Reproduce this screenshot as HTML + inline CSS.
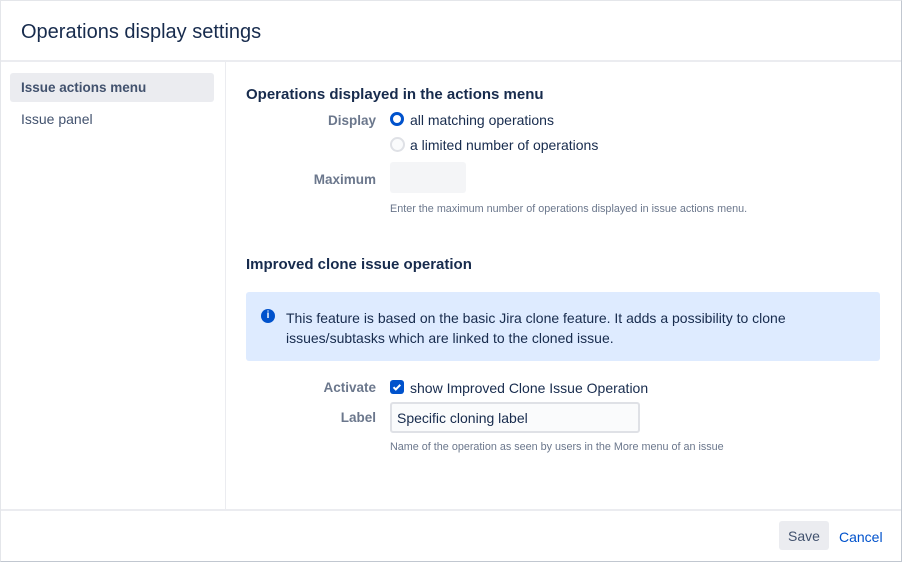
<!DOCTYPE html><html><head><style>
body{margin:0;width:902px;height:562px;background:#fff;font-family:"Liberation Sans",sans-serif;color:#172b4d;position:relative;overflow:hidden}
.a{position:absolute;white-space:nowrap}
.frame{position:absolute;left:0;top:0;width:900px;height:560px;border:1px solid #c1c7d0;border-top-color:#e4e6ea;border-left-color:#e4e6ea}
.lbl{color:#6b778c;font-weight:bold;font-size:13.5px;text-align:right;width:120px}
.t{font-size:14px;color:#172b4d}
.h{font-size:15px;font-weight:bold;color:#172b4d}
.help{font-size:10.8px;color:#6b778c}
</style></head><body>
<div class="frame"></div>
<div class="a" style="left:21px;top:21px;font-size:20px;color:#172b4d">Operations display settings</div>
<div class="a" style="left:1px;top:60px;width:900px;height:2px;background:#ebecf0"></div>
<div class="a" style="left:225px;top:62px;width:1px;height:447px;background:#ebecf0"></div>
<div class="a" style="left:10px;top:73px;width:204px;height:29px;background:#ebecf0;border-radius:3px"></div>
<div class="a t" style="left:21px;top:80px;font-weight:bold;color:#42526e;font-size:13.5px">Issue actions menu</div>
<div class="a t" style="left:21px;top:111px;color:#42526e">Issue panel</div>
<div class="a h" style="left:246px;top:86px">Operations displayed in the actions menu</div>
<div class="a lbl" style="left:256px;top:113px">Display</div>
<div class="a" style="left:390px;top:112px;width:8px;height:8px;border:3.5px solid #0052cc;border-radius:50%;background:#fff"></div>
<div class="a t" style="left:410px;top:112px">all matching operations</div>
<div class="a" style="left:390px;top:137px;width:11px;height:11px;border:2px solid #dfe1e6;border-radius:50%;background:#fafbfc"></div>
<div class="a t" style="left:410px;top:137px">a limited number of operations</div>
<div class="a lbl" style="left:256px;top:172px">Maximum</div>
<div class="a" style="left:390px;top:162px;width:76px;height:31px;background:#f4f5f7;border-radius:3px"></div>
<div class="a help" style="left:390px;top:203px">Enter the maximum number of operations displayed in issue actions menu.</div>
<div class="a h" style="left:246px;top:256px">Improved clone issue operation</div>
<div class="a" style="left:246px;top:292px;width:634px;height:69px;background:#deebff;border-radius:3px"></div>
<div class="a" style="left:261px;top:309px;width:14px;height:14px;border-radius:50%;background:#0052cc;color:#fff;font-size:10px;font-weight:bold;text-align:center;line-height:14px">i</div>
<div class="a t" style="left:286px;top:308px;line-height:20px">This feature is based on the basic Jira clone feature. It adds a possibility to clone<br>issues/subtasks which are linked to the cloned issue.</div>
<div class="a lbl" style="left:256px;top:380px">Activate</div>
<div class="a" style="left:390px;top:380px;width:14px;height:14px;background:#0052cc;border-radius:3px"><svg width="14" height="14" viewBox="0 0 14 14"><path d="M3.5 7.2l2.3 2.3 4.5-4.7" stroke="#fff" stroke-width="2" fill="none"/></svg></div>
<div class="a t" style="left:410px;top:380px">show Improved Clone Issue Operation</div>
<div class="a lbl" style="left:256px;top:410px">Label</div>
<div class="a" style="left:390px;top:402px;width:246px;height:27px;border:2px solid #dfe1e6;border-radius:3px;background:#fafbfc"></div>
<div class="a t" style="left:397px;top:410px">Specific cloning label</div>
<div class="a help" style="left:390px;top:441px">Name of the operation as seen by users in the More menu of an issue</div>
<div class="a" style="left:1px;top:509px;width:900px;height:2px;background:#ebecf0"></div>
<div class="a" style="left:779px;top:521px;width:50px;height:29px;background:#ebecf0;border-radius:3px;color:#42526e;font-size:14px;text-align:center;line-height:30px">Save</div>
<div class="a t" style="left:839px;top:529px;color:#0052cc">Cancel</div>
</body></html>
